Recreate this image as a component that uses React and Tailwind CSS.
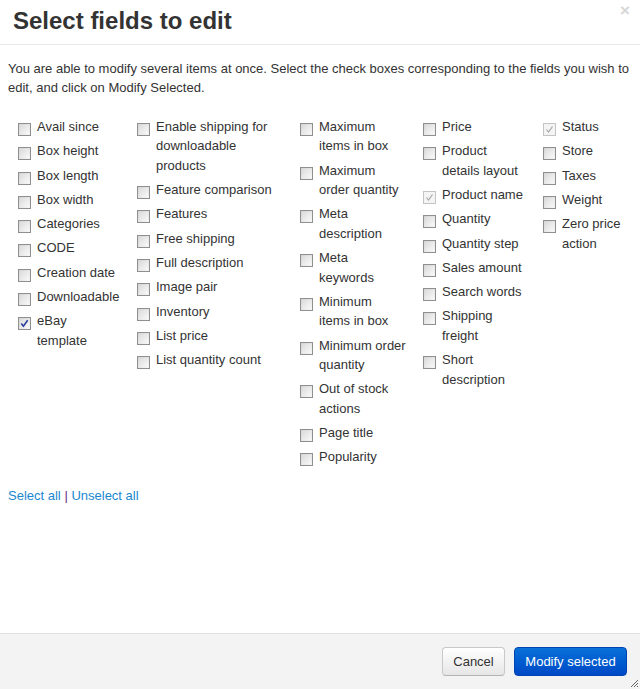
import React from "react";

const cols = [
  {
    w: "w-[119px]",
    items: [
      ["Avail since"],
      ["Box height"],
      ["Box length"],
      ["Box width"],
      ["Categories"],
      ["CODE"],
      ["Creation date"],
      ["Downloadable"],
      ["eBay", "template"],
    ],
  },
  {
    w: "w-[163px]",
    items: [
      ["Enable shipping for", "downloadable", "products"],
      ["Feature comparison"],
      ["Features"],
      ["Free shipping"],
      ["Full description"],
      ["Image pair"],
      ["Inventory"],
      ["List price"],
      ["List quantity count"],
    ],
  },
  {
    w: "w-[123px]",
    items: [
      ["Maximum", "items in box"],
      ["Maximum", "order quantity"],
      ["Meta", "description"],
      ["Meta", "keywords"],
      ["Minimum", "items in box"],
      ["Minimum order", "quantity"],
      ["Out of stock", "actions"],
      ["Page title"],
      ["Popularity"],
    ],
  },
  {
    w: "w-[120px]",
    items: [
      ["Price"],
      ["Product", "details layout"],
      ["Product name"],
      ["Quantity"],
      ["Quantity step"],
      ["Sales amount"],
      ["Search words"],
      ["Shipping", "freight"],
      ["Short", "description"],
    ],
  },
  {
    w: "flex-1",
    items: [["Status"], ["Store"], ["Taxes"], ["Weight"], ["Zero price", "action"]],
  },
];

const checkedActive = new Set(["eBay"]);
const checkedDisabled = new Set(["Product name", "Status"]);

function Box({ state }) {
  if (state === "disabled") {
    return (
      <div className="relative mt-[6px] h-[13px] w-[13px] shrink-0 border border-[#c4c4c4] bg-[#f4f4f4]">
        <svg viewBox="0 0 11 11" className="absolute inset-0 h-[11px] w-[11px]">
          <path d="M2.5 5.5 L4.5 8 L8.5 2.5" fill="none" stroke="#a8a8a8" strokeWidth="1.2" />
        </svg>
      </div>
    );
  }
  return (
    <div className="relative mt-[6px] h-[13px] w-[13px] shrink-0 border border-[#8e8f8f] bg-gradient-to-br from-[#d4d4d4] to-[#f6f6f6]">
      <div className="absolute inset-[1px] bg-gradient-to-br from-[#dcdcdc] to-[#f8f8f8]" />
      {state === "checked" && (
        <svg viewBox="0 0 11 11" className="absolute inset-0 h-[11px] w-[11px]">
          <path d="M2.3 5.5 L4.4 8.2 L8.7 2.3" fill="none" stroke="#2b3d9c" strokeWidth="1.6" />
        </svg>
      )}
    </div>
  );
}

export default function App() {
  return (
    <div
      className="flex h-[689px] w-[640px] flex-col bg-white text-[13px] text-[#333]"
      style={{ fontFamily: '"Liberation Sans", Arial, sans-serif' }}
    >
      <div className="relative flex h-[45px] shrink-0 items-center border-b border-[#e8e8e8] pb-[2px] pl-[13px]">
        <h1 className="text-[24px] font-bold leading-none text-[#333]">Select fields to edit</h1>
        <span className="absolute right-[10px] top-[1px] text-[17px] font-bold leading-[20px] text-[#d6d6d6]">×</span>
      </div>
      <div className="flex-1 px-[8px] pt-[14px]">
        <p className="leading-[19px]">
          You are able to modify several items at once. Select the check boxes corresponding to the fields you wish to
          edit, and click on Modify Selected.
        </p>
        <div className="mt-[20px] flex pl-[10px]">
          {cols.map((c, ci) => (
            <div key={ci} className={c.w}>
              {c.items.map((lines) => {
                const key = lines.join(" ");
                const state = checkedActive.has(lines[0]) ? "checked" : checkedDisabled.has(key) ? "disabled" : "none";
                return (
                  <div key={key} className="mb-[4.9px] flex gap-[6px]">
                    <Box state={state} />
                    <div className="whitespace-nowrap leading-[19.4px]">
                      {lines.map((l, i) => (
                        <div key={i}>{l}</div>
                      ))}
                    </div>
                  </div>
                );
              })}
            </div>
          ))}
        </div>
        <div className="mt-[14px] leading-[19px]">
          <a className="text-[#1a87d0]">Select all</a> <span className="text-[#6a2c8a]">|</span>{" "}
          <a className="text-[#1a87d0]">Unselect all</a>
        </div>
      </div>
      <div className="relative flex h-[56px] shrink-0 items-center justify-end gap-[9px] border-t border-[#e2e2e2] bg-[#f3f3f3] pr-[13px]">
        <button className="flex h-[29px] w-[63px] items-center justify-center rounded-[4px] border border-[#c8c8c8] border-b-[#b3b3b3] bg-gradient-to-b from-white to-[#e6e6e6] text-[13px] text-[#333]">
          Cancel
        </button>
        <button className="flex h-[29px] w-[113px] items-center justify-center rounded-[4px] border border-[#0044b3] bg-gradient-to-b from-[#0b70d8] to-[#0048c6] text-[13px] text-white">
          Modify selected
        </button>
        <svg className="absolute bottom-[1px] right-[1px] h-[10px] w-[10px]" viewBox="0 0 10 10">
          <path d="M9 2 L2 9 M9 5 L5 9 M9 8 L8 9" stroke="#666" strokeWidth="1" />
        </svg>
      </div>
    </div>
  );
}
